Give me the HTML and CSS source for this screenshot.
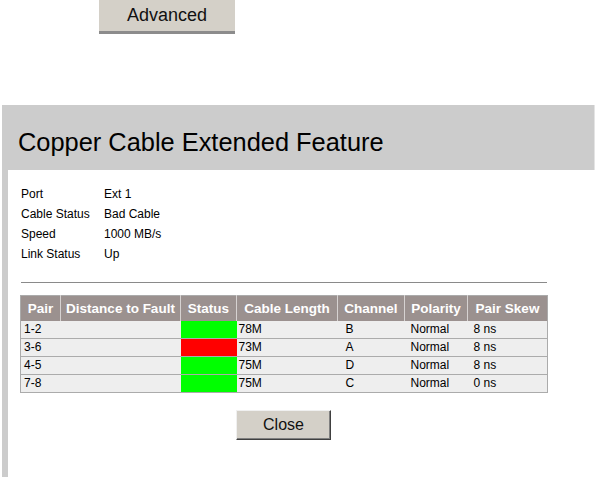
FILE: index.html
```html
<!DOCTYPE html>
<html>
<head>
<meta charset="utf-8">
<link rel="stylesheet" href="styles.css">
</head>
<body>
<div class="top">
  <button class="btn-adv">Advanced</button>
</div>
<div class="panel">
  <div class="panel-head">Copper Cable Extended Feature</div>
  <div class="panel-body">
    <div class="info">
      <div class="lbl">Port</div><div class="val">Ext 1</div>
      <div class="lbl">Cable Status</div><div class="val">Bad Cable</div>
      <div class="lbl">Speed</div><div class="val">1000 MB/s</div>
      <div class="lbl">Link Status</div><div class="val">Up</div>
    </div>
    <div class="rule"></div>
    <table class="grid">
      <colgroup>
        <col class="c1"><col class="c2"><col class="c3"><col class="c4"><col class="c5"><col class="c6"><col class="c7">
      </colgroup>
      <thead>
        <tr><th>Pair</th><th>Distance to Fault</th><th>Status</th><th>Cable Length</th><th>Channel</th><th>Polarity</th><th>Pair Skew</th></tr>
      </thead>
      <tbody>
        <tr><td class="p">1-2</td><td></td><td class="ok"></td><td class="len">78M</td><td class="ch">B</td><td class="pol">Normal</td><td class="sk">8 ns</td></tr>
        <tr><td class="p">3-6</td><td></td><td class="bad"></td><td class="len">73M</td><td class="ch">A</td><td class="pol">Normal</td><td class="sk">8 ns</td></tr>
        <tr><td class="p">4-5</td><td></td><td class="ok"></td><td class="len">75M</td><td class="ch">D</td><td class="pol">Normal</td><td class="sk">8 ns</td></tr>
        <tr><td class="p">7-8</td><td></td><td class="ok"></td><td class="len">75M</td><td class="ch">C</td><td class="pol">Normal</td><td class="sk">0 ns</td></tr>
      </tbody>
    </table>
    <div class="actions">
      <button class="btn-close">Close</button>
    </div>
  </div>
</div>
</body>
</html>
```
FILE: styles.css
```css
html, body {
  margin: 0;
  padding: 0;
  background: #ffffff;
}
body {
  height: 477px;
  overflow: hidden;
  display: flex;
  flex-direction: column;
  font-family: "Liberation Sans", Arial, sans-serif;
  color: #000;
}
.top {
  height: 105px;
  flex: none;
}
.btn-adv {
  display: block;
  margin-left: 99px;
  width: 136px;
  height: 34px;
  padding: 0;
  border: none;
  border-bottom: 3px solid #8c8c8c;
  background: #d4d0c8;
  font-family: "Liberation Sans", Arial, sans-serif;
  font-size: 18px;
  color: #111;
}
.panel {
  flex: 1;
  margin-left: 2px;
  width: 593px;
  display: flex;
  flex-direction: column;
}
.panel-head {
  flex: none;
  height: 65px;
  background: #cccccc;
  padding: 9px 0 0 16px;
  font-size: 25.4px;
  line-height: 56px;
  color: #000;
  box-sizing: border-box;
  border-right: 1px solid #e4e4e4;
}
.panel-body {
  flex: 1;
  border-left: 6px solid #cccccc;
  padding: 14px 0 0 12px;
}
.info {
  display: grid;
  grid-template-columns: 83px auto;
  font-size: 12px;
  line-height: 20px;
  padding-left: 1px;
}
.rule {
  margin: 18px 0 0 1px;
  width: 526px;
  height: 1px;
  background: #8a8a8a;
}
.grid {
  margin-top: 12px;
  width: 527px;
  table-layout: fixed;
  border-collapse: collapse;
  border: 1px solid #ababab;
  font-size: 12px;
}
.c1 { width: 40px; }
.c2 { width: 120px; }
.c3 { width: 56px; }
.c4 { width: 101px; }
.c5 { width: 67px; }
.c6 { width: 63px; }
.c7 { width: 80px; }
.grid th {
  height: 25px;
  padding: 0;
  background: #9b918f;
  color: #ffffff;
  font-weight: bold;
  font-size: 13.5px;
  text-align: center;
  border-left: 1px solid #d6d2d1;
  white-space: nowrap;
}
.grid th:first-child {
  border-left: none;
}
.grid td {
  height: 17px;
  padding: 0;
  background: #eeeeee;
  border-bottom: 1px solid #ababab;
  white-space: nowrap;
  line-height: 17px;
}
.grid td.p { padding-left: 3px; }
.grid td.len { padding-left: 2px; }
.grid td.ch { padding-left: 8px; }
.grid td.pol { padding-left: 6px; }
.grid td.sk { padding-left: 6px; }
.grid td.ok { background: #00ff00; }
.grid td.bad { background: #ff0000; }
.actions {
  width: 527px;
  display: flex;
  justify-content: center;
  margin-top: 17px;
}
.btn-close {
  width: 95px;
  height: 30px;
  padding: 0;
  background: #d4d0c8;
  border-top: 1px solid #f0f0f0;
  border-left: 1px solid #f0f0f0;
  border-right: 1px solid #404040;
  border-bottom: 1px solid #404040;
  box-shadow: inset -1px -1px 0 #808080;
  font-family: "Liberation Sans", Arial, sans-serif;
  font-size: 16px;
  color: #111;
}
```
